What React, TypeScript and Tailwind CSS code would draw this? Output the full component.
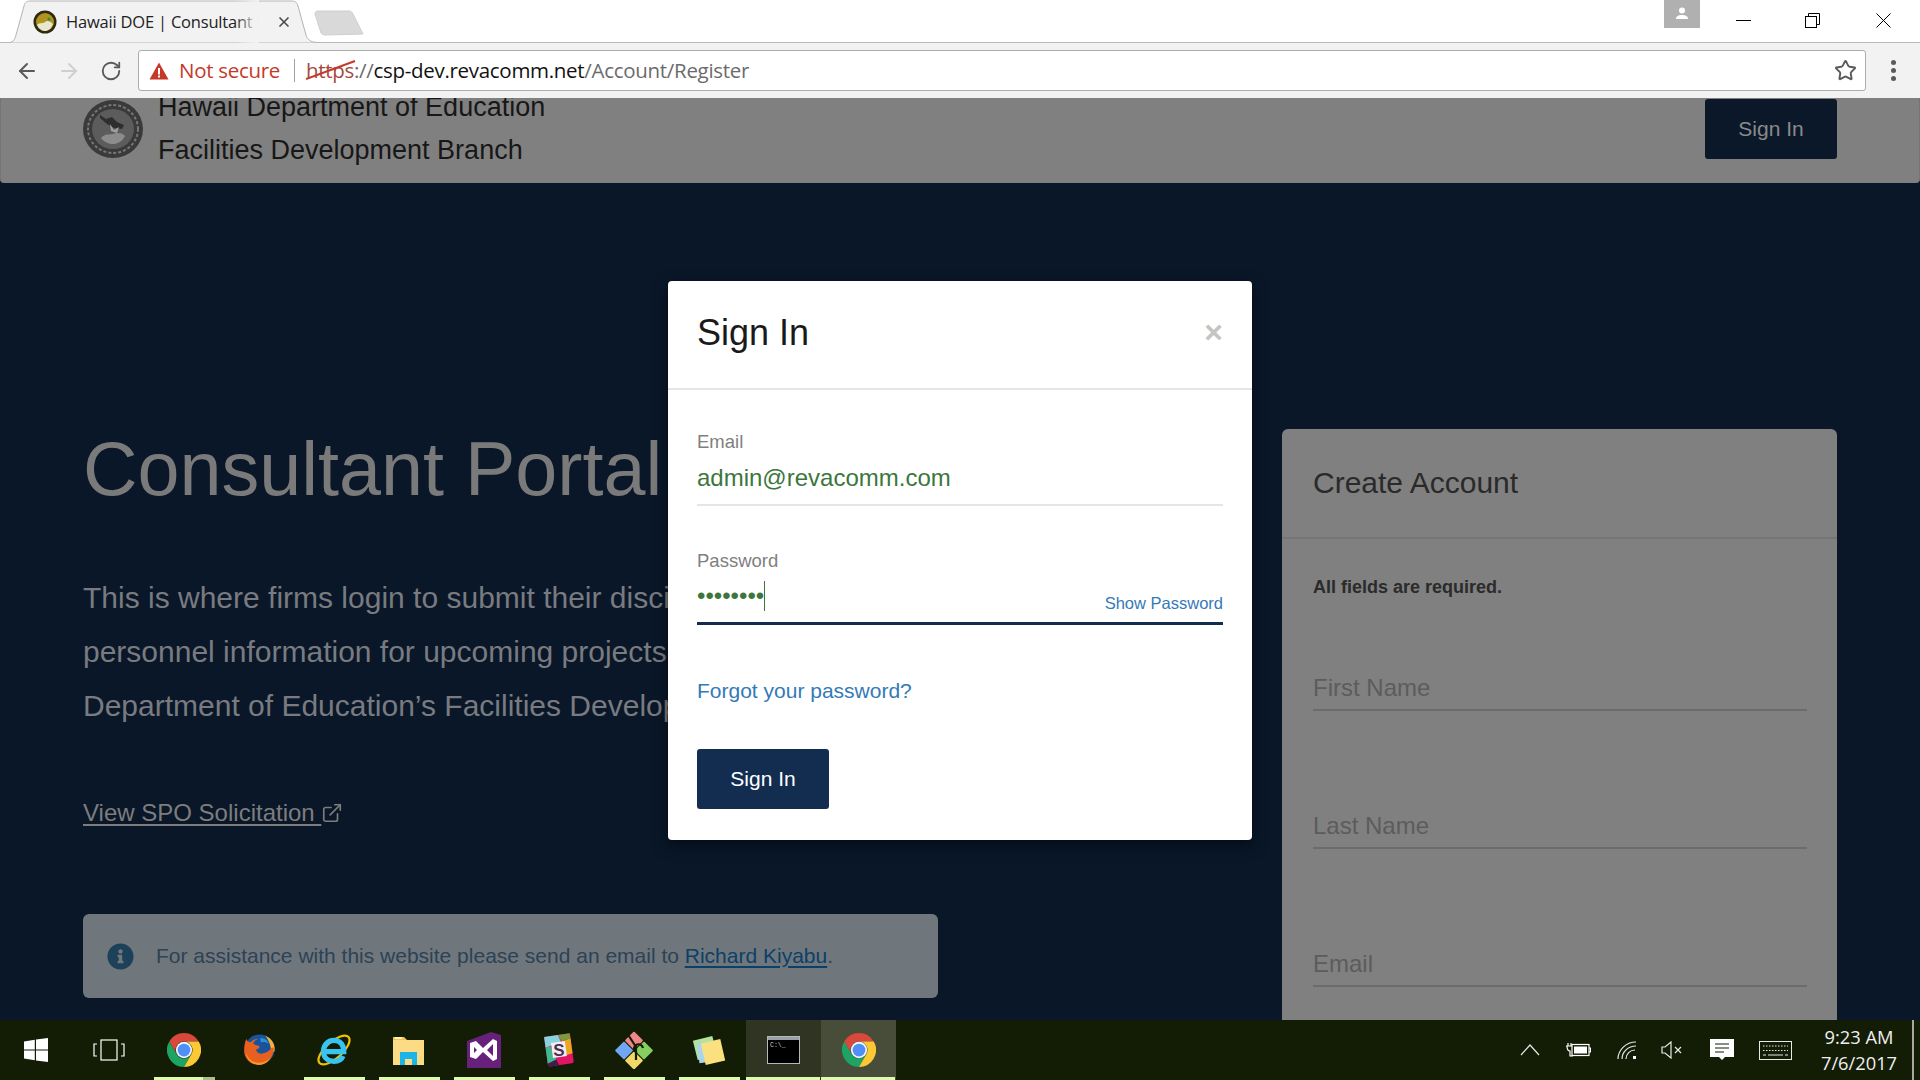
import React from "react";
import { ArrowLeft, ArrowRight, RotateCw, Star, ExternalLink } from "lucide-react";
import { FaInfoCircle } from "react-icons/fa";

const Chrome = () => (
  <svg width="34" height="34" viewBox="0 0 48 48">
    <path fill="#d9483b" d="M24 0C15.1 0 7.4 4.8 3.2 12l10.4 18A12 12 0 0 1 24 12h20.8C40.6 4.8 32.9 0 24 0z" />
    <path fill="#1da462" d="M3.2 12A24 24 0 0 0 24 48l10.4-18A12 12 0 0 1 13.6 30L3.2 12z" />
    <path fill="#fcc934" d="M44.8 12H24a12 12 0 0 1 10.4 18L24 48A24 24 0 0 0 44.8 12z" />
    <circle cx="24" cy="24" r="11.5" fill="#f1f5fb" />
    <circle cx="24" cy="24" r="9" fill="#4f8ff6" />
  </svg>
);

const Firefox = () => (
  <svg width="34" height="34" viewBox="0 0 48 48">
    <circle cx="25" cy="23" r="21" fill="#17549c" />
    <path fill="#f8b13a" d="M33 4c9 4 14 12 13 21-1 2-3 3-5 1 0-8-3-16-8-22z" />
    <path fill="#e8601f" d="M6 8c1 3 3 5 6 5 3-3 7-5 11-5-4 2-7 4-7 7 2 2 5 2 8 3 2 3-1 5-4 5 0 4 4 7 9 6 5-1 9-3 12-7 3-3 4-1 4 1-1 12-10 22-21 22C12 45 3 36 3 25c0-6 1-12 3-17z" />
    <path fill="#f59a26" d="M6 27c2 10 10 15 19 15 6 0 11-3 15-7-4 7-10 10-16 10C14 45 6 37 6 27z" />
    <path fill="#2f8fd6" d="M26 7c5 0 10 3 12 8-3-2-7-3-10-2-2 1-2-3-2-6z" />
  </svg>
);

const IE = () => (
  <svg width="36" height="36" viewBox="0 0 48 48">
    <ellipse cx="24" cy="24" rx="26" ry="11" fill="none" stroke="#efc005" strokeWidth="3" transform="rotate(-42 24 24)" />
    <path fill="none" stroke="#37c4f0" strokeWidth="7" d="M13 26H37C37 16 31 11 24 11C15 11 10 18 10 26C10 34 16 39 24 39C30 39 34 37 36 32" />
  </svg>
);

const Folder = () => (
  <svg width="33" height="31" viewBox="0 0 33 31">
    <path fill="#f2c452" d="M1 2h11l3 3h-14z" />
    <rect x="3" y="2" width="7" height="2" fill="#fff3c4" />
    <rect x="1" y="5" width="31" height="25" fill="#fbdc84" />
    <path fill="#1cb5e8" d="M8 30V17h17v13h-5v-6h-7v6z" />
  </svg>
);

const VS = () => (
  <svg width="34" height="36" viewBox="0 0 34 36">
    <path fill="#68217a" d="M0 9 24 0l10 3v33H0z" />
    <path fill="#fff" d="M3 11l6-2 7 7 10-9 4 2v18l-4 2-10-9-7 7-6-2zM7 15v6l3-3zM26 12l-6 6 6 6z" fillRule="evenodd" />
  </svg>
);

const Slack = () => (
  <svg width="34" height="36" viewBox="0 0 34 36">
    <g transform="rotate(-8 17 18)">
      <rect x="4" y="3" width="26" height="30" rx="2" fill="#e01563" />
      <path fill="#89d3df" d="M4 3h14l2 7-16 4z" />
      <path fill="#3eb991" d="M4 14l5-1 4 14-9 3z" />
      <path fill="#e9a820" d="M21 10l9-2v15l-6 1z" />
      <path fill="#7b9b3e" d="M18 3h12v5l-9 2z" />
      <path fill="#3c1f4b" d="M4 30l9-3 2 6H6a2 2 0 0 1-2-2z" />
      <rect x="10" y="10" width="14" height="15" fill="#f4eef2" />
    </g>
    <text x="17" y="24" textAnchor="middle" fontSize="17" fontWeight="700" fontFamily="'Liberation Sans', sans-serif" fill="#4a2f52">S</text>
  </svg>
);

const GitIcon = () => (
  <svg width="38" height="38" viewBox="0 0 38 38">
    <rect x="12.500" y="3" width="13" height="13" rx="1" fill="#f0868a" transform="rotate(45 19 9.500)" />
    <rect x="22.500" y="13" width="13" height="13" rx="1" fill="#84cf5f" transform="rotate(45 29 19.500)" />
    <rect x="2.500" y="13" width="13" height="13" rx="1" fill="#71a6f2" transform="rotate(45 9 19.500)" />
    <rect x="12.500" y="23" width="13" height="13" rx="1" fill="#f2d866" transform="rotate(45 19 29.500)" />
    <path fill="none" stroke="#141c07" strokeWidth="2.200" d="M12 2 21 16v13M28 17a4.500 4.500 0 1 0-6 5" />
  </svg>
);

const Sticky = () => (
  <svg width="36" height="34" viewBox="0 0 36 34">
    <rect x="4" y="5" width="20" height="20" fill="#b2e39e" transform="rotate(-14 14 15)" />
    <rect x="7" y="9" width="20" height="20" fill="#a8d4ee" transform="rotate(-8 17 19)" />
    <rect x="12" y="8" width="20" height="22" fill="#fbe080" transform="rotate(-13 22 19)" />
  </svg>
);

const Cmd = () => (
  <svg width="33" height="28" viewBox="0 0 33 28">
    <rect x="0.5" y="0.5" width="32" height="27" fill="#000" stroke="#b5b8bd" />
    <rect x="1" y="1" width="31" height="3" fill="#9aa0a6" />
    <text x="3" y="11" fontSize="6.5" fontFamily="'Liberation Mono', monospace" fill="#d0d0d0">C:\_</text>
  </svg>
);

const Win = () => (
  <svg width="24" height="24" viewBox="0 0 24 24" fill="#fff">
    <path d="M0 3.4 10.8 1.8v9.6H0zM12 1.6 24 0v11.4H12zM0 12.6h10.8v9.6L0 20.6zM12 12.6h12V24l-12-1.6z" />
  </svg>
);

const TaskView = () => (
  <svg width="32" height="22" viewBox="0 0 32 22" fill="none" stroke="#fff" strokeWidth="1.2">
    <rect x="8" y="1" width="16" height="20" />
    <path d="M4 5H1v12h3M28 5h3v12h-3" />
  </svg>
);

const apps: { el: React.ReactNode; line: string; bg: string; multi?: boolean }[] = [
  { el: <Chrome />, line: "line", bg: "", multi: true },
  { el: <Firefox />, line: "none", bg: "" },
  { el: <IE />, line: "line", bg: "" },
  { el: <Folder />, line: "line", bg: "" },
  { el: <VS />, line: "line", bg: "" },
  { el: <Slack />, line: "line", bg: "" },
  { el: <GitIcon />, line: "line", bg: "" },
  { el: <Sticky />, line: "line", bg: "" },
  { el: <Cmd />, line: "wide", bg: "bg-[#2f3522]" },
  { el: <Chrome />, line: "wide", bg: "bg-[#474d39]" },
];

function BrowserChrome() {
  return (
    <div className="shrink-0 font-['Open_Sans',sans-serif]">
      <div className="relative h-[43px] bg-white border-b border-[#b9b9b9] flex">
        <svg className="absolute left-0 top-0" width="380" height="43" viewBox="0 0 380 43">
          <path d="M9 43 L9 42.5 C14 42.5 15 38 16 35 L24 6 C25 2 27 1 31 1 L291 1 C295 1 297 2 298 6 L306 35 C307 38 309 42.5 318 42.5 L318 43 Z" fill="#f2f2f2" stroke="#b4b4b4" />
          <path d="M315 14 C315 12 316 11 318 11 L349 11 C351 11 352 12 353 14 L363 34 L325 35 C323 35 322 34 321 33 Z" fill="#d9d9d9" stroke="#cfcfcf" />
        </svg>
        <div className="relative ml-[33px] mt-[10px] w-[24px] h-[24px]">
          <svg width="24" height="24" viewBox="0 0 24 24">
            <circle cx="12" cy="12" r="11.5" fill="#2e2a12" />
            <circle cx="12" cy="12" r="9" fill="#b09320" />
            <path d="M4 15c3-3 6-1 8-3s5-1 8 2c-2 5-5 7-8 7s-6-2-8-6z" fill="#e9e6d0" />
            <circle cx="16" cy="9" r="1.5" fill="#2f8f3a" />
          </svg>
        </div>
        <div className="relative ml-[9px] w-[193px] overflow-hidden whitespace-nowrap text-[16.5px] tracking-[-0.2px] leading-[43px] h-[43px] text-[#222]">
          Hawaii DOE | Consultant Portal
          <span className="absolute right-0 top-0 h-full w-[24px] bg-gradient-to-r from-[#f2f2f2]/0 to-[#f2f2f2]" />
        </div>
        <div className="relative ml-[16px] mt-[13px] w-[18px] h-[18px] text-[#555]">
          <svg width="18" height="18" viewBox="0 0 18 18" fill="none" stroke="#4a4a4a" strokeWidth="1.6">
            <path d="M4.5 4.5l9 9M13.5 4.5l-9 9" />
          </svg>
        </div>
        <div className="relative ml-auto flex h-[28px] items-start">
          <div className="w-[36px] h-[28px] bg-[#b0b0b0] flex items-center justify-center mr-[36px]">
            <svg width="14" height="14" viewBox="0 0 14 14" fill="#fff">
              <circle cx="7" cy="3.5" r="3" />
              <path d="M1 12c0-3 2.500-4 6-4s6 1 6 4z" />
            </svg>
          </div>
          <div className="w-[15px] h-[28px] mr-[54px] flex items-center">
            <div className="w-[15px] h-px bg-black mt-[13px]" />
          </div>
          <svg className="mt-[13px] mr-[56px]" width="15" height="15" viewBox="0 0 15 15" fill="none" stroke="#000">
            <rect x="0.5" y="3.500" width="11" height="11" />
            <path d="M3.500 3.500V0.500H14.500V11.500H11.500" />
          </svg>
          <svg className="mt-[13px] mr-[29px]" width="15" height="15" viewBox="0 0 15 15" fill="none" stroke="#000">
            <path d="M0.500 0.500L14.500 14.500M14.500 0.500L0.500 14.500" />
          </svg>
        </div>
      </div>
      <div className="h-[55px] bg-[#f2f2f2] flex items-center">
        <ArrowLeft className="ml-[15px] text-[#5a5a5a]" size={24} strokeWidth={2} />
        <ArrowRight className="ml-[18px] text-[#cfcfcf]" size={24} strokeWidth={2} />
        <RotateCw className="ml-[19px] text-[#5a5a5a]" size={22} strokeWidth={2} />
        <div className="relative ml-[16px] w-[1728px] h-[41px] bg-white border border-[#acacac] rounded-[3px] flex items-center text-[20.5px]">
          <svg className="ml-[10px]" width="20" height="18" viewBox="0 0 20 18">
            <path d="M10 0.500 19.500 17.500H0.500z" fill="#c53929" />
            <rect x="9" y="6" width="2" height="6.500" fill="#fff" />
            <rect x="9" y="13.500" width="2" height="2" fill="#fff" />
          </svg>
          <span className="ml-[10px] text-[#c53929] tracking-[-0.3px]">Not secure</span>
          <span className="ml-[14px] w-px h-[23px] bg-[#a0a0a0]" />
          <span className="ml-[11px] relative tracking-[-0.3px]">
            <span className="text-[#a5493f]">https</span>
            <span className="text-[#6b6b6b]">://</span>
            <span className="text-[#111]">csp-dev.revacomm.net</span>
            <span className="text-[#6b6b6b]">/Account/Register</span>
            <svg className="absolute left-0 top-[5px]" width="50" height="20" viewBox="0 0 50 20">
              <path d="M0 19 49 1" stroke="#c53929" strokeWidth="2" />
            </svg>
          </span>
          <Star className="absolute right-[8px] top-[8px] text-[#5a5a5a]" size={23} strokeWidth={2} />
        </div>
        <div className="ml-[25px] flex flex-col gap-[3px]">
          <span className="w-[5px] h-[5px] rounded-full bg-[#5a5a5a]" />
          <span className="w-[5px] h-[5px] rounded-full bg-[#5a5a5a]" />
          <span className="w-[5px] h-[5px] rounded-full bg-[#5a5a5a]" />
        </div>
      </div>
    </div>
  );
}

function Field({ label, last }: { label: string; last?: boolean }) {
  return (
    <div className={`border-b-2 border-[#6c6c6c] h-[44px] text-[24px] leading-[42px] text-[#5c5c5c] ${last ? "" : "mb-[94px]"}`}>
      {label}
    </div>
  );
}

function Page() {
  return (
    <div className="flex-1 min-h-0 overflow-hidden bg-[#091729] font-['Liberation_Sans',Arial,sans-serif]">
      <header className="h-[85px] bg-[#808080] border-x border-[#757575] rounded-b-[4px] overflow-hidden flex items-start pl-[82px] pr-[82px]">
        <svg className="mt-[2px] shrink-0" width="60" height="58" viewBox="0 0 60 58">
          <ellipse cx="30" cy="29" rx="30" ry="29" fill="#3a3a3a" />
          <ellipse cx="30" cy="29" rx="21" ry="20" fill="#5c5c5c" />
          <ellipse cx="30" cy="29" rx="25" ry="24" fill="none" stroke="#777" strokeWidth="2" strokeDasharray="3 2" />
          <path d="M18 38c4-5 9-3 12-4s8-2 12 2c-3 6-8 8-12 8s-9-2-12-6z" fill="#8c8c8c" />
          <path d="M17 15l6 4 6-2 5 5 7 3-2 4-8-1-7-4-7-6z" fill="#2e2e2e" />
          <path d="M27 24l4 6 5-3-2 6-6-2z" fill="#a0a0a0" />
        </svg>
        <div className="ml-[15px] -mt-[12px] text-[27px] leading-[43px] text-[#171717]">
          <div>Hawaii Department of Education</div>
          <div>Facilities Development Branch</div>
        </div>
        <button className="ml-auto mt-px w-[132px] h-[60px] rounded-[3px] bg-[#0a182a] text-[#8a8a8a] text-[21px]">Sign In</button>
      </header>
      <main className="flex px-[83px]">
        <div className="w-[855px] shrink-0 pt-[242px] text-[#797b80]">
          <h1 className="text-[75.5px] leading-[88px] text-[#7a7a7a] font-normal">Consultant Portal</h1>
          <div className="mt-[58px] text-[30px] leading-[54px] whitespace-nowrap">
            <p>This is where firms login to submit their discipline and key</p>
            <p>personnel information for upcoming projects with the</p>
            <p>Department of Education’s Facilities Development Branch.</p>
          </div>
          <a className="mt-[63px] flex items-center text-[24px] leading-[34px] text-[#7d7d7d]">
            <span className="underline underline-offset-[3px] whitespace-pre">View SPO Solicitation </span>
            <ExternalLink size={22} strokeWidth={1.8} />
          </a>
          <div className="mt-[84px] h-[84px] rounded-[6px] bg-[#6f777d] flex items-center pl-[24px] text-[21px] text-[#2d4254]">
            <FaInfoCircle size={27} color="#1d4158" />
            <span className="ml-[22px]">
              For assistance with this website please send an email to{" "}
              <a className="underline underline-offset-[3px] text-[#0d4067]">Richard Kiyabu</a>.
            </span>
          </div>
        </div>
        <section className="ml-[344px] mt-[246px] w-[555px] h-[800px] rounded-t-[6px] bg-[#808080]">
          <div className="h-[110px] border-b-2 border-[#757575] pl-[31px] pr-[30px] pb-[2px] flex items-center text-[30px] text-[#2a2a2a]">Create Account</div>
          <div className="pl-[31px] pr-[30px]">
            <p className="mt-[36px] h-[24px] text-[18px] leading-[24px] font-bold text-[#2b2b2b]">All fields are required.</p>
            <div className="mt-[68px]">
              <Field label="First Name" />
              <Field label="Last Name" />
              <Field label="Email" last />
            </div>
          </div>
        </section>
      </main>
    </div>
  );
}

function Modal() {
  return (
    <div className="absolute inset-0 flex justify-center items-start pt-[281px] pointer-events-none font-['Liberation_Sans',Arial,sans-serif]">
      <div className="relative w-[584px] h-[559px] bg-white rounded-[4px] shadow-[0_5px_15px_rgba(0,0,0,0.5)]">
        <div className="h-[109px] border-b-2 border-[#e5e5e5] px-[29px] flex items-center justify-between">
          <h2 className="text-[36px] text-[#1a1a1a] -mt-[4px]">Sign In</h2>
          <span className="text-[32px] font-bold text-[#c4c4c4] leading-none -mt-[6px]">×</span>
        </div>
        <div className="px-[29px]">
          <label className="block mt-[42px] text-[18.5px] leading-[20px] text-[#808080]">Email</label>
          <div className="mt-[8px] h-[46px] border-b-2 border-[#e5e5e5] text-[24px] leading-[36px] text-[#3c763d]">admin@revacomm.com</div>
          <label className="block mt-[45px] text-[18.5px] leading-[20px] text-[#808080]">Password</label>
          <div className="relative mt-[9px] h-[45px] border-b-[3px] border-[#132d50] text-[24px] leading-[32px] text-[#3c763d]">
            <span className="inline-block border-r border-[#3c763d] h-[30px] leading-[30px]">••••••••</span>
            <a className="absolute right-0 top-[13px] text-[16.5px] leading-[20px] text-[#337ab7]">Show Password</a>
          </div>
          <a className="block mt-[54px] text-[21px] leading-[24px] text-[#337ab7]">Forgot your password?</a>
          <button className="block mt-[46px] w-[132px] h-[60px] rounded-[3px] bg-[#132d50] text-white text-[21px]">Sign In</button>
        </div>
      </div>
    </div>
  );
}

function Taskbar() {
  return (
    <div className="relative shrink-0 h-[60px] bg-[#131c05] flex items-stretch text-white font-['Open_Sans',sans-serif]">
      <div className="w-[71px] flex items-center justify-center"><Win /></div>
      <div className="w-[75px] flex items-center justify-center"><TaskView /></div>
      {apps.map((a, i) => (
        <div key={i} className={`relative w-[75px] flex items-center justify-center ${a.bg}`}>
          {a.el}
          {a.line === "line" && (
            <div className="absolute bottom-0 left-[8px] w-[61px] h-[3px] bg-[#dcfbac] flex justify-end">
              {a.multi && <div className="w-[12px] h-full bg-[#a9c288]" />}
            </div>
          )}
          {a.line === "wide" && <div className="absolute bottom-0 left-0 right-[1px] h-[3px] bg-[#dcfbac]" />}
        </div>
      ))}
      <div className="ml-auto flex items-stretch">
        <div className="w-[44px] flex items-center justify-center">
          <svg width="20" height="12" viewBox="0 0 20 12" fill="none" stroke="#e8e8e8" strokeWidth="1.2"><path d="M1 11 10 1l9 10" /></svg>
        </div>
        <div className="w-[52px] flex items-center justify-center">
          <svg width="26" height="16" viewBox="0 0 26 16" fill="none" stroke="#fff" strokeWidth="1.200">
            <rect x="7" y="2.500" width="17" height="11" />
            <rect x="9" y="4.500" width="13" height="7" fill="#fff" stroke="none" />
            <path d="M24 6h1.500v4H24" />
            <path d="M1 4h6M2 4c0 3 1 5 3 5v5h3M3 1v3M6 1v3" />
          </svg>
        </div>
        <div className="w-[46px] flex items-center justify-center">
          <svg width="20" height="18" viewBox="0 0 20 18" fill="none" stroke="#e8e8e8" strokeWidth="1.200">
            <path d="M1 18C1 9 9 1 19 1M5 18C5 11 11 5 19 5M9 18C9 13 13 9 18 9" />
            <rect x="16" y="15" width="3" height="3" fill="#fff" stroke="none" />
          </svg>
        </div>
        <div className="w-[44px] flex items-center justify-center">
          <svg width="22" height="18" viewBox="0 0 22 18" fill="none" stroke="#e8e8e8" strokeWidth="1.200">
            <path d="M1 6h3l6-5v16l-6-5H1zM14 6l6 6M20 6l-6 6" />
          </svg>
        </div>
        <div className="w-[56px] flex items-center justify-center">
          <svg width="24" height="24" viewBox="0 0 24 24">
            <path d="M0 1h24v18h-9l-3 3-3-3H0z" fill="#fff" />
            <path d="M5 6h14M5 10h14M5 14h9" stroke="#131c05" strokeWidth="1.200" />
          </svg>
        </div>
        <div className="w-[50px] flex items-center justify-center">
          <svg width="33" height="19" viewBox="0 0 33 19" fill="none" stroke="#e8e8e8">
            <rect x="0.500" y="0.500" width="32" height="18" />
            <path d="M4 5h25M4 9.500h25" strokeDasharray="1.500 1.500" />
            <path d="M4 14h3M9 14h15M26 14h3" />
          </svg>
        </div>
        <div className="w-[112px] pl-[6px] flex flex-col items-center justify-center text-[18.3px] leading-[26px] text-[#efefef] whitespace-nowrap">
          <span>9:23 AM</span>
          <span>7/6/2017</span>
        </div>
        <div className="w-[2px] bg-[#a8a89e] mr-[6px]" />
      </div>
    </div>
  );
}

export default function App() {
  return (
    <div className="relative w-[1920px] h-[1080px] overflow-hidden flex flex-col">
      <BrowserChrome />
      <Page />
      <Taskbar />
      <Modal />
    </div>
  );
}
